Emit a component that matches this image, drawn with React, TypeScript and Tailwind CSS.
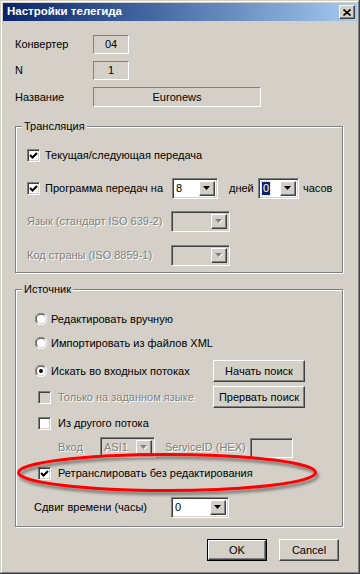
import React from "react";

const raised =
  "border border-t-white border-l-white border-b-[#404040] border-r-[#404040] shadow-[inset_-1px_-1px_0_#808080] bg-[#d4d0c8]";
const sunken2 =
  "border border-t-[#808080] border-l-[#808080] border-b-white border-r-white shadow-[inset_1px_1px_0_#404040,inset_-1px_-1px_0_#d4d0c8]";
const disabledText = "text-[#808080] [text-shadow:1px_1px_0_#fff]";

const Check = ({ checked = false, disabled = false }: { checked?: boolean; disabled?: boolean }) => (
  <span
    className={`flex h-[13px] w-[13px] shrink-0 items-center justify-center ${sunken2} ${
      disabled ? "bg-[#d4d0c8]" : "bg-white"
    }`}
  >
    {checked && (
      <svg width="9" height="9" viewBox="0 0 9 9">
        <path d="M1 4 L3.5 6.5 L8 2" fill="none" stroke="#000" strokeWidth="2" />
      </svg>
    )}
  </span>
);

const Radio = ({ selected = false }: { selected?: boolean }) => (
  <svg width="12" height="12" viewBox="0 0 12 12" className="shrink-0">
    <circle cx="6" cy="6" r="5.5" fill="#fff" />
    <path d="M1.8 10.2 A5.5 5.5 0 0 1 10.2 1.8" fill="none" stroke="#808080" strokeWidth="1" />
    <path d="M2.6 9.4 A4.5 4.5 0 0 1 9.4 2.6" fill="none" stroke="#404040" strokeWidth="1" />
    <path d="M10.2 1.8 A5.5 5.5 0 0 1 1.8 10.2" fill="none" stroke="#fff" strokeWidth="1" />
    <path d="M9.4 2.6 A4.5 4.5 0 0 1 2.6 9.4" fill="none" stroke="#d4d0c8" strokeWidth="1" />
    {selected && <circle cx="6" cy="6" r="2" fill="#000" />}
  </svg>
);

const Arrow = ({ disabled = false }: { disabled?: boolean }) => (
  <span className={`flex h-full w-[16px] shrink-0 items-center justify-center ${raised}`}>
    <svg width="8" height="5" viewBox="0 0 8 5">
      {disabled && <path d="M1 1 H8 L4.5 4.5 Z" fill="#fff" />}
      <path d="M0 0 H7 L3.5 4 Z" fill={disabled ? "#808080" : "#000"} />
    </svg>
  </span>
);

const Combo = ({
  value,
  width,
  disabled = false,
  selected = false,
}: {
  value?: string;
  width: string;
  disabled?: boolean;
  selected?: boolean;
}) => (
  <div className={`flex h-full shrink-0 items-stretch p-[2px] ${width} ${sunken2} ${disabled ? "bg-[#d4d0c8]" : "bg-white"}`}>
    <div className="flex flex-1 items-center pl-[1px]">
      {value &&
        (selected ? (
          <span className="bg-[#0a246a] px-[1px] leading-[13px] text-white outline-1 outline-dotted outline-[#d4d0c8]">{value}</span>
        ) : (
          <span className={disabled ? disabledText : ""}>{value}</span>
        ))}
    </div>
    <Arrow disabled={disabled} />
  </div>
);

const Button = ({ label, width, isDefault = false }: { label: string; width: string; isDefault?: boolean }) => (
  <div className={`flex h-[22px] shrink-0 ${width} ${isDefault ? "border border-black" : ""}`}>
    <div className={`flex flex-1 items-center justify-center ${raised}`}>{label}</div>
  </div>
);

const Group = ({ title, height, children }: { title: string; height: string; children: React.ReactNode }) => (
  <div
    className={`relative ml-[15px] w-[328px] ${height} border border-[#808080] shadow-[inset_1px_1px_0_#fff,1px_1px_0_#fff]`}
  >
    <span className="absolute -top-[8px] left-[6px] bg-[#d4d0c8] px-[2px] leading-[14px]">{title}</span>
    {children}
  </div>
);

export default function App() {
  return (
    <div className="relative h-[574px] w-[360px] overflow-hidden bg-[#d4d0c8] font-['Liberation_Sans'] text-[11px] text-black shadow-[inset_-1px_-1px_0_#404040,inset_1px_1px_0_#d4d0c8,inset_-2px_-2px_0_#808080,inset_2px_2px_0_#fff]">
      {/* title bar */}
      <div className="mx-[3px] mt-[3px] flex h-[18px] items-center justify-between bg-gradient-to-r from-[#0a246a] to-[#a6caf0] pl-[4px] pr-[2px]">
        <span className="text-[11.5px] font-bold text-white">Настройки телегида</span>
        <div className={`flex h-[14px] w-[16px] items-center justify-center ${raised}`}>
          <svg width="8" height="7" viewBox="0 0 8 7">
            <path d="M0.5 0.5 L7.5 6.5 M7.5 0.5 L0.5 6.5" stroke="#000" strokeWidth="1.6" />
          </svg>
        </div>
      </div>

      {/* header fields */}
      <div className="flex flex-col pl-[15px]">
        <div className="mt-[14px] flex h-[19px] items-center">
          <span className="w-[78px]">Конвертер</span>
          <div className="flex h-full w-[36px] items-center justify-center border border-t-[#808080] border-l-[#808080] border-b-white border-r-white">04</div>
        </div>
        <div className="mt-[7px] flex h-[19px] items-center">
          <span className="w-[78px]">N</span>
          <div className="flex h-full w-[36px] items-center justify-center border border-t-[#808080] border-l-[#808080] border-b-white border-r-white">1</div>
        </div>
        <div className="mt-[7px] flex h-[20px] items-center">
          <span className="w-[78px]">Название</span>
          <div className="flex h-full w-[168px] items-center justify-center border border-t-[#808080] border-l-[#808080] border-b-white border-r-white">Euronews</div>
        </div>
      </div>

      <div className="mt-[19px]">
        <Group title="Трансляция" height="h-[147px]">
          <div className="mt-[18px] flex h-[20px] items-center pl-[11px]">
            <Check checked />
            <span className="ml-[5px]">Текущая/следующая передача</span>
          </div>
          <div className="mt-[13px] flex h-[21px] items-center pl-[11px]">
            <Check checked />
            <span className="ml-[5px] w-[127px]">Программа передач на</span>
            <Combo value="8" width="w-[46px]" />
            <span className="ml-[11px] w-[29px]">дней</span>
            <Combo value="0" width="w-[41px]" selected />
            <span className="ml-[4px]">часов</span>
          </div>
          <div className="mt-[12px] flex h-[21px] items-center pl-[11px]">
            <span className={`w-[144px] ${disabledText}`}>Язык (стандарт ISO 639-2)</span>
            <Combo width="w-[59px]" disabled />
          </div>
          <div className="mt-[13px] flex h-[21px] items-center pl-[11px]">
            <span className={`w-[144px] ${disabledText}`}>Код страны (ISO 8859-1)</span>
            <Combo width="w-[59px]" disabled />
          </div>
        </Group>
      </div>

      <div className="mt-[16px]">
        <Group title="Источник" height="h-[238px]">
          <div className="mt-[19px] flex h-[20px] items-center pl-[19px]">
            <Radio />
            <span className="ml-[4px]">Редактировать вручную</span>
          </div>
          <div className="mt-[4px] flex h-[20px] items-center pl-[19px]">
            <Radio />
            <span className="ml-[4px]">Импортировать из файлов XML</span>
          </div>
          <div className="mt-[7px] flex h-[22px] items-center pl-[19px]">
            <Radio selected />
            <span className="ml-[4px] w-[162px]">Искать во входных потоках</span>
            <Button label="Начать поиск" width="w-[92px]" />
          </div>
          <div className="mt-[4px] flex h-[22px] items-center pl-[22px]">
            <Check disabled />
            <span className={`ml-[7px] w-[155px] ${disabledText}`}>Только на заданном языке</span>
            <Button label="Прервать поиск" width="w-[92px]" />
          </div>
          <div className="mt-[5px] flex h-[20px] items-center pl-[22px]">
            <Check />
            <span className="ml-[7px]">Из другого потока</span>
          </div>
          <div className="mt-[4px] flex h-[21px] items-center pl-[42px]">
            <span className={`w-[42px] ${disabledText}`}>Вход</span>
            <Combo value="ASI1" width="w-[55px]" disabled />
            <span className={`ml-[10px] w-[85px] ${disabledText}`}>ServiceID (HEX)</span>
            <div className={`h-[20px] w-[43px] ${sunken2} bg-[#d4d0c8]`} />
          </div>
          <div className="mt-[5px] flex h-[20px] items-center pl-[22px]">
            <Check checked />
            <span className="ml-[7px]">Ретранслировать без редактирования</span>
          </div>
          <div className="mt-[14px] flex h-[21px] items-center pl-[18px]">
            <span className="w-[137px]">Сдвиг времени (часы)</span>
            <Combo value="0" width="w-[58px]" />
          </div>
        </Group>
      </div>

      <div className="mt-[12px] flex gap-[12px] pl-[207px]">
        <Button label="OK" width="w-[60px]" isDefault />
        <Button label="Cancel" width="w-[60px]" />
      </div>

      {/* red highlight ellipse drawn over the dialog */}
      <svg className="pointer-events-none absolute left-[10px] top-[446px]" width="320" height="56" viewBox="0 0 320 56">
        <defs>
          <filter id="sh" x="-10%" y="-40%" width="120%" height="180%">
            <feDropShadow dx="2" dy="3" stdDeviation="1.6" floodColor="#000" floodOpacity="0.45" />
          </filter>
        </defs>
        <ellipse cx="157" cy="26.5" rx="148.5" ry="18" fill="none" stroke="#ff0000" strokeWidth="3" filter="url(#sh)" />
      </svg>
    </div>
  );
}
